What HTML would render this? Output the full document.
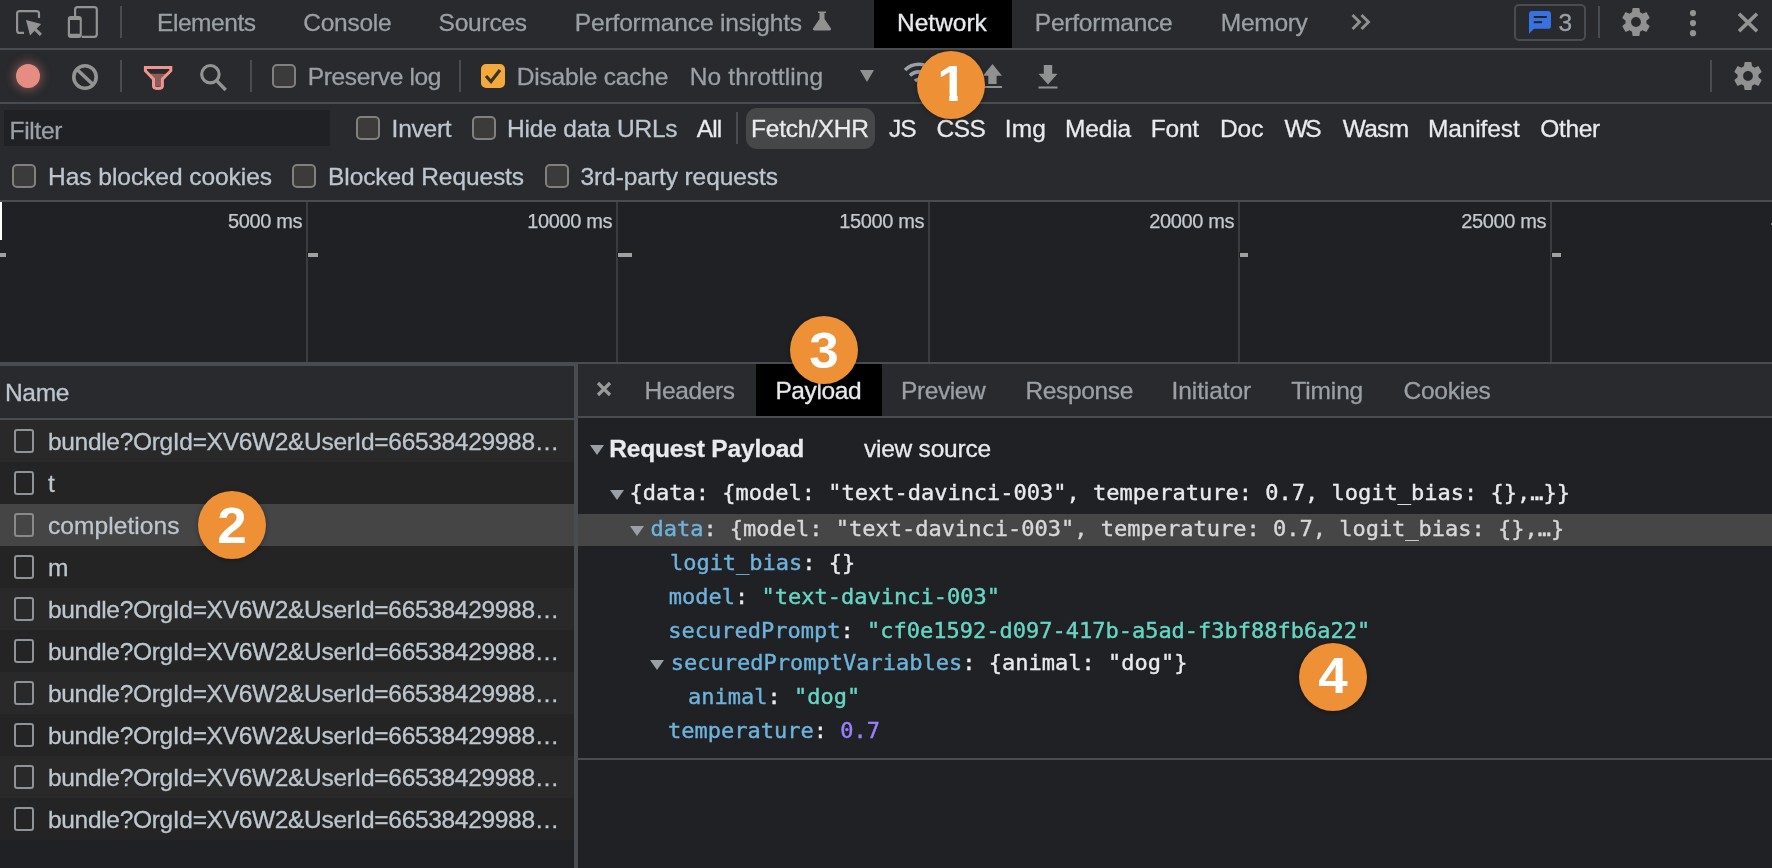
<!DOCTYPE html>
<html lang="en">
<head>
<meta charset="utf-8">
<title>DevTools - Network</title>
<style>
*{box-sizing:border-box;margin:0;padding:0}
html,body{width:1772px;height:868px;overflow:hidden;background:#202124}
body{position:relative;font-family:"Liberation Sans",Arial,Helvetica,sans-serif;font-size:24px;color:#9aa0a6;-webkit-font-smoothing:antialiased}
#root{position:absolute;left:0;top:0;width:1772px;height:868px;will-change:transform}
.abs{position:absolute}
.bar{position:absolute;left:0;width:1772px;background:#292a2d}
.hl{position:absolute;left:0;width:1772px;height:2px;background:#494c50}
.vd{position:absolute;width:2px;background:#494c50}
.t{position:absolute;white-space:nowrap;line-height:28px;height:28px;font-size:24.5px;color:#9aa0a6;letter-spacing:-0.25px;margin-top:1px;-webkit-text-stroke:0.3px currentColor}
.tl{color:#bdc6cf}
.w{color:#e8eaed}
.cb{position:absolute;width:24px;height:24px;border:2px solid #827f7d;border-radius:5px;background:#3b3b3b}
.rcb{position:absolute;left:14px;width:20px;height:24px;border:2px solid #8e9398;border-radius:3px}
.row{position:absolute;left:0;width:574px;height:42px}
.row .t{left:48px;top:7px;color:#bdc6cf;letter-spacing:0}
.gl{position:absolute;top:202px;width:2px;height:160px;background:#3a3c3f}
.tk{position:absolute;top:253px;height:4px;background:#a0a0a0;box-shadow:0 0 0 1px #202124}
.lab{position:absolute;top:209px;font-size:20px;line-height:24px;color:#c4c9cf;white-space:nowrap;text-align:right;width:120px;letter-spacing:-0.4px;-webkit-text-stroke:0.25px currentColor}
.m{position:absolute;white-space:pre;font-family:"DejaVu Sans Mono","Liberation Mono",monospace;font-size:22px;line-height:34px;height:34px;color:#e8eaed;margin-left:-1.5px;-webkit-text-stroke:0.4px currentColor}
.k{color:#6db3dc}
.s{color:#66d6c3}
.n{color:#9980ff}
.tri{position:absolute;width:0;height:0;border-left:7.3px solid transparent;border-right:7.3px solid transparent;border-top:10.5px solid #9aa0a5}
.badge{position:absolute;width:68px;height:68px;border-radius:50%;background:#ee9036;color:#fff;font-weight:bold;font-size:50px;line-height:71px;text-align:center;box-shadow:0 1px 5px rgba(0,0,0,.3)}
.badge b{display:inline-block;transform:scaleX(1.06)}
svg{position:absolute;overflow:visible}
</style>
</head>
<body>
<div id="root">

<!-- ===== main tab bar ===== -->
<div class="bar" style="top:0;height:48px"></div>
<div class="hl" style="top:48px"></div>
<div class="abs" style="left:874px;top:0;width:138px;height:48px;background:#000"></div>

<svg id="i-inspect" style="left:0;top:0" width="130" height="48" viewBox="0 0 130 48"><path d="M24 32.900H19.600A2.500 2.500 0 0 1 17.100 30.400V13.600A2.500 2.500 0 0 1 19.600 11.100H36.500A2.500 2.500 0 0 1 39 13.600V18.100" fill="none" stroke="#939393" stroke-width="2.200"/><path d="M26 20L41.200 24.100L30 35.500Z" fill="#939393"/><path d="M34.500 28.700L40.900 34.900" stroke="#939393" stroke-width="3" fill="none"/></svg>
<svg id="i-device" style="left:0;top:0" width="130" height="48" viewBox="0 0 130 48"><path d="M75.100 16.200V9.600A2.500 2.500 0 0 1 77.600 7.100H94.300A2.500 2.500 0 0 1 96.800 9.600V34.300A2.500 2.500 0 0 1 94.300 36.800H81.800" fill="none" stroke="#939393" stroke-width="2.200"/><path fill-rule="evenodd" fill="#939393" d="M70.800 16.100H78.800A3 3 0 0 1 81.800 19.100V34.900A3 3 0 0 1 78.800 37.900H70.800A3 3 0 0 1 67.800 34.900V19.100A3 3 0 0 1 70.800 16.100ZM70 20V33.700H79.700V20Z"/></svg>
<div class="vd" style="left:120px;top:6px;height:32px"></div>

<div class="t" style="left:157.1px;top:8px;letter-spacing:-0.46px;">Elements</div>
<div class="t" style="left:303.2px;top:8px;letter-spacing:-0.24px;">Console</div>
<div class="t" style="left:438.6px;top:8px;letter-spacing:-0.23px;">Sources</div>
<div class="t" style="left:574.8px;top:8px;letter-spacing:-0.15px;">Performance insights</div>
<svg id="i-flask" style="left:812px;top:11px" width="20" height="20" viewBox="0 0 20 20"><path d="M6 0.500H14V2H12.500V8L19 17.500A1.500 1.500 0 0 1 17.800 19.500H2.200A1.500 1.500 0 0 1 1 17.500L7.500 8V2H6Z" fill="#919191"/></svg>
<div class="t w" style="left:897.1px;top:8px;letter-spacing:-0.02px;">Network</div>
<div class="t" style="left:1034.8px;top:8px;letter-spacing:-0.23px;">Performance</div>
<div class="t" style="left:1220.8px;top:8px;letter-spacing:-0.28px;">Memory</div>
<svg id="i-more" style="left:1351px;top:14px" width="20" height="16" viewBox="0 0 20 16"><path d="M1.500 1L8.500 8L1.500 15M10.500 1L17.500 8L10.500 15" fill="none" stroke="#919191" stroke-width="2.900"/></svg>

<div class="abs" style="left:1514px;top:4px;width:72px;height:37px;border:2px solid #494c50;border-radius:5px"></div>
<svg id="i-issue" style="left:1529px;top:10.800px" width="22" height="22.200" viewBox="0 0 22 23" preserveAspectRatio="none"><path d="M3 0H19A3 3 0 0 1 22 3V15.500A3 3 0 0 1 19 18.500H5L0 23.500V3A3 3 0 0 1 3 0Z" fill="#3871e0"/><rect x="4.800" y="5.200" width="13" height="2" fill="#24211f"/><rect x="4.800" y="10.600" width="8.300" height="2" fill="#24211f"/></svg>
<div class="t" style="left:1558.6px;top:8px;letter-spacing:-0.25px;">3</div>
<div class="vd" style="left:1598px;top:6px;height:32px"></div>
<svg class="gear" style="left:1622px;top:8px" width="28" height="28" viewBox="0 0 24 24"><path fill="#919191" d="M19.430 12.980c.040-.320.070-.640.070-.980s-.030-.660-.070-.980l2.110-1.650c.190-.150.240-.420.120-.640l-2-3.460c-.120-.220-.390-.300-.610-.220l-2.490 1c-.520-.400-1.080-.730-1.690-.980l-.380-2.650C14.460 2.180 14.250 2 14 2h-4c-.250 0-.460.180-.490.420l-.380 2.650c-.610.250-1.170.590-1.690.980l-2.490-1c-.230-.090-.490 0-.610.220l-2 3.460c-.130.220-.070.490.120.640l2.110 1.650c-.040.320-.070.650-.070.980s.030.660.070.980l-2.110 1.650c-.190.150-.240.420-.120.640l2 3.460c.120.220.390.300.610.220l2.490-1c.520.400 1.080.730 1.690.980l.380 2.650c.030.240.240.420.490.420h4c.250 0 .460-.180.490-.420l.380-2.650c.610-.250 1.170-.590 1.690-.980l2.490 1c.230.090.490 0 .610-.220l2-3.460c.120-.220.070-.490-.120-.640l-2.110-1.650zM12 15.500c-1.930 0-3.500-1.570-3.500-3.500s1.570-3.500 3.500-3.500 3.500 1.570 3.500 3.500-1.570 3.500-3.500 3.500z" transform="translate(12 12) scale(1.200) translate(-12 -12)"/></svg>
<svg id="i-kebab" style="left:1689px;top:9px" width="8" height="28" viewBox="0 0 8 28"><circle cx="4" cy="4.100" r="3.100" fill="#939393"/><circle cx="4" cy="14.100" r="3.100" fill="#939393"/><circle cx="4" cy="24.200" r="3.100" fill="#939393"/></svg>
<svg id="i-close" style="left:1738px;top:13px" width="20" height="19" viewBox="0 0 20 19"><path d="M1 0.700L19 18.300M19 0.700L1 18.300" stroke="#939393" stroke-width="3.700" fill="none"/></svg>

<!-- ===== network toolbar ===== -->
<div class="bar" style="top:50px;height:52px"></div>
<div class="hl" style="top:102px"></div>
<div class="abs" style="left:16px;top:64px;width:24px;height:24px;border-radius:50%;background:#e68c83;box-shadow:0 0 8px 3px rgba(230,140,131,.35)"></div>
<svg id="i-clear" style="left:72px;top:64px" width="26" height="26" viewBox="0 0 26 26"><circle cx="13" cy="13" r="11.200" fill="none" stroke="#939393" stroke-width="3.600"/><path d="M5 5.500L21 20.500" stroke="#939393" stroke-width="3.600"/></svg>
<div class="vd" style="left:120px;top:60px;height:32px"></div>
<svg id="i-filter" style="left:143px;top:65px" width="31" height="26" viewBox="0 0 31 26"><path d="M6.500 8.800H23.700L19.400 13.500V21.500H10.500V13.500Z" fill="#8a5c5a"/><path d="M2.400 2.400H27.800V5.700L19.400 14.200V21.300Q19.400 23.400 15 23.400Q10.500 23.400 10.500 21.300V14.200L2.400 5.700Z" fill="none" stroke="#ee968e" stroke-width="3" stroke-linejoin="miter"/></svg>
<svg id="i-search" style="left:200px;top:63px" width="28" height="30" viewBox="0 0 28 30"><circle cx="10.400" cy="11.200" r="8.700" fill="none" stroke="#939393" stroke-width="3.200"/><path d="M16.600 17.600L25.700 27" stroke="#939393" stroke-width="3.500"/></svg>
<div class="vd" style="left:250px;top:60px;height:32px"></div>
<div class="cb" style="left:272px;top:64px"></div>
<div class="t" style="left:307.8px;top:62px;letter-spacing:-0.35px;">Preserve log</div>
<div class="vd" style="left:459px;top:60px;height:32px"></div>
<div class="cb" style="left:481px;top:64px;background:#f4a93d;border-color:#f4a93d"></div>
<svg id="i-check" style="left:484px;top:68px" width="18" height="16" viewBox="0 0 18 16"><path d="M2 8L7 13.500L16 2" fill="none" stroke="#3a3326" stroke-width="3.200"/></svg>
<div class="t" style="left:516.8px;top:62px;letter-spacing:-0.19px;">Disable cache</div>
<div class="t" style="left:689.8px;top:62px;letter-spacing:0.11px;">No throttling</div>
<div class="tri" style="left:859.5px;top:70px;border-top-width:12px;border-top-color:#919191"></div>
<svg id="i-wifi" style="left:903px;top:60.700px" width="32" height="26" viewBox="0 0 32 26"><path d="M2 9A20 20 0 0 1 30 9M7 14.500A13 13 0 0 1 25 14.500M12 20A6 6 0 0 1 20 20" fill="none" stroke="#9aa0a6" stroke-width="3.600"/></svg>
<svg id="i-up" style="left:983px;top:64px" width="20" height="24" viewBox="0 0 20 24"><path d="M9.500 0L19 11.700H13.600V20H5.300V11.700H0Z" fill="#919191"/><rect x="1" y="22" width="18" height="2" fill="#919191"/></svg>
<svg id="i-down" style="left:1038px;top:64.500px" width="20" height="24" viewBox="0 0 20 24"><path d="M10 19.500L19.500 8.800H14.200V0H5.800V8.800H0.500Z" fill="#919191"/><rect x="0.500" y="21.500" width="19" height="2" fill="#919191"/></svg>
<div class="vd" style="left:1710px;top:60px;height:32px"></div>
<svg class="gear" style="left:1734px;top:62px" width="28" height="28" viewBox="0 0 24 24"><path fill="#919191" d="M19.430 12.980c.040-.320.070-.640.070-.980s-.030-.660-.070-.980l2.110-1.650c.190-.150.240-.420.120-.640l-2-3.460c-.120-.220-.390-.300-.610-.220l-2.490 1c-.520-.400-1.080-.730-1.690-.980l-.380-2.650C14.460 2.180 14.250 2 14 2h-4c-.250 0-.460.180-.490.420l-.380 2.650c-.610.250-1.170.590-1.690.980l-2.490-1c-.230-.090-.490 0-.610.220l-2 3.460c-.130.220-.070.490.120.640l2.110 1.650c-.040.320-.070.650-.070.980s.030.660.070.980l-2.110 1.650c-.190.150-.240.420-.120.640l2 3.460c.120.220.390.300.610.220l2.490-1c.520.400 1.080.730 1.690.980l.380 2.650c.030.240.240.420.490.420h4c.250 0 .460-.180.490-.420l.380-2.650c.610-.250 1.170-.590 1.690-.980l2.490 1c.230.090.490 0 .610-.220l2-3.460c.120-.220.070-.490-.120-.640l-2.110-1.650zM12 15.500c-1.930 0-3.500-1.570-3.500-3.500s1.570-3.500 3.500-3.500 3.500 1.570 3.500 3.500-1.570 3.500-3.500 3.500z" transform="translate(12 12) scale(1.200) translate(-12 -12)"/></svg>

<!-- ===== filter bar ===== -->
<div class="bar" style="top:104px;height:96px"></div>
<div class="hl" style="top:200px"></div>
<div class="abs" style="left:4px;top:110px;width:326px;height:36px;background:#202124"></div>
<div class="t" style="left:9.6px;top:116px;letter-spacing:-0.33px;">Filter</div>
<div class="cb" style="left:356px;top:116px"></div>
<div class="t tl" style="left:391.6px;top:114px;letter-spacing:-0.24px;">Invert</div>
<div class="cb" style="left:472px;top:116px"></div>
<div class="t tl" style="left:507.1px;top:114px;letter-spacing:-0.19px;">Hide data URLs</div>
<div class="t w" style="left:696.7px;top:114px;letter-spacing:-0.90px;">All</div>
<div class="vd" style="left:736px;top:112px;height:32px"></div>
<div class="abs" style="left:746px;top:108px;width:129px;height:41px;border-radius:11px;background:#464749"></div>
<div class="t w" style="left:751.1px;top:114px;letter-spacing:-0.25px;">Fetch/XHR</div>
<div class="t w" style="left:889.0px;top:114px;letter-spacing:-0.88px;">JS</div>
<div class="t w" style="left:936.5px;top:114px;letter-spacing:-0.51px;">CSS</div>
<div class="t w" style="left:1004.7px;top:114px;letter-spacing:0.21px;">Img</div>
<div class="t w" style="left:1064.9px;top:114px;letter-spacing:-0.10px;">Media</div>
<div class="t w" style="left:1150.8px;top:114px;letter-spacing:-0.25px;">Font</div>
<div class="t w" style="left:1219.9px;top:114px;letter-spacing:-0.02px;">Doc</div>
<div class="t w" style="left:1284.5px;top:114px;letter-spacing:-2.33px;">WS</div>
<div class="t w" style="left:1342.7px;top:114px;letter-spacing:-0.71px;">Wasm</div>
<div class="t w" style="left:1427.9px;top:114px;letter-spacing:-0.11px;">Manifest</div>
<div class="t w" style="left:1540.2px;top:114px;letter-spacing:-0.31px;">Other</div>

<div class="cb" style="left:12px;top:164px"></div>
<div class="t tl" style="left:48.1px;top:162px;letter-spacing:-0.04px;">Has blocked cookies</div>
<div class="cb" style="left:292px;top:164px"></div>
<div class="t tl" style="left:328.1px;top:162px;letter-spacing:-0.10px;">Blocked Requests</div>
<div class="cb" style="left:545px;top:164px"></div>
<div class="t tl" style="left:580.5px;top:162px;letter-spacing:-0.08px;">3rd-party requests</div>

<!-- ===== timeline overview ===== -->
<div class="gl" style="left:306px"></div>
<div class="gl" style="left:616px"></div>
<div class="gl" style="left:928px"></div>
<div class="gl" style="left:1238px"></div>
<div class="gl" style="left:1550px"></div>
<div class="lab" style="left:182px">5000 ms</div>
<div class="lab" style="left:492px">10000 ms</div>
<div class="lab" style="left:804px">15000 ms</div>
<div class="lab" style="left:1114px">20000 ms</div>
<div class="lab" style="left:1426px">25000 ms</div>
<div class="tk" style="left:0;width:6px"></div>
<div class="tk" style="left:308px;width:10px"></div>
<div class="tk" style="left:618px;width:14px"></div>
<div class="tk" style="left:1240px;width:8px"></div>
<div class="tk" style="left:1552px;width:9px"></div>
<div class="abs" style="left:0;top:202px;width:2px;height:38px;background:#fff"></div>
<div class="abs" style="left:1771px;top:223px;width:1px;height:2px;background:#7d8085"></div>
<div class="hl" style="top:362px"></div>

<!-- ===== request list (left) ===== -->
<div class="abs" style="left:0;top:364px;width:574px;height:2px;background:#494c50"></div>
<div class="abs" style="left:0;top:366px;width:574px;height:52px;background:#292a2d"></div>
<div class="abs" style="left:0;top:418px;width:574px;height:2px;background:#494c50"></div>
<div class="t tl" style="left:4.9px;top:378px;letter-spacing:-0.26px;">Name</div>

<div class="row" style="top:420px;background:#292929"><div class="rcb" style="top:9px"></div><div class="t" style="letter-spacing:-0.32px">bundle?OrgId=XV6W2&amp;UserId=66538429988…</div></div>
<div class="row" style="top:462px;background:#242424"><div class="rcb" style="top:9px"></div><div class="t">t</div></div>
<div class="row" style="top:504px;background:#454545"><div class="rcb" style="top:9px;border-color:#8a8a8a"></div><div class="t" style="letter-spacing:0.08px">completions</div></div>
<div class="row" style="top:546px;background:#242424"><div class="rcb" style="top:9px"></div><div class="t">m</div></div>
<div class="row" style="top:588px;background:#292929"><div class="rcb" style="top:9px"></div><div class="t" style="letter-spacing:-0.32px">bundle?OrgId=XV6W2&amp;UserId=66538429988…</div></div>
<div class="row" style="top:630px;background:#242424"><div class="rcb" style="top:9px"></div><div class="t" style="letter-spacing:-0.32px">bundle?OrgId=XV6W2&amp;UserId=66538429988…</div></div>
<div class="row" style="top:672px;background:#292929"><div class="rcb" style="top:9px"></div><div class="t" style="letter-spacing:-0.32px">bundle?OrgId=XV6W2&amp;UserId=66538429988…</div></div>
<div class="row" style="top:714px;background:#242424"><div class="rcb" style="top:9px"></div><div class="t" style="letter-spacing:-0.32px">bundle?OrgId=XV6W2&amp;UserId=66538429988…</div></div>
<div class="row" style="top:756px;background:#292929"><div class="rcb" style="top:9px"></div><div class="t" style="letter-spacing:-0.32px">bundle?OrgId=XV6W2&amp;UserId=66538429988…</div></div>
<div class="row" style="top:798px;background:#242424"><div class="rcb" style="top:9px"></div><div class="t" style="letter-spacing:-0.32px">bundle?OrgId=XV6W2&amp;UserId=66538429988…</div></div>

<div class="abs" style="left:574px;top:364px;width:4px;height:504px;background:#494c50"></div>

<!-- ===== detail pane (right) ===== -->
<div class="abs" style="left:578px;top:364px;width:1194px;height:52px;background:#292a2d"></div>
<div class="abs" style="left:578px;top:416px;width:1194px;height:2px;background:#494c50"></div>
<svg id="i-x2" style="left:597px;top:382px" width="14" height="14" viewBox="0 0 14 14"><path d="M1 1L13 13M13 1L1 13" stroke="#9a9a9a" stroke-width="3.200" fill="none"/></svg>
<div class="abs" style="left:756px;top:364px;width:126px;height:52px;background:#000"></div>
<div class="t" style="left:644.6px;top:376px;letter-spacing:-0.36px;">Headers</div>
<div class="t w" style="left:775.4px;top:376px;letter-spacing:-0.37px;">Payload</div>
<div class="t" style="left:901.1px;top:376px;letter-spacing:-0.43px;">Preview</div>
<div class="t" style="left:1025.4px;top:376px;letter-spacing:-0.34px;">Response</div>
<div class="t" style="left:1171.5px;top:376px;letter-spacing:-0.08px;">Initiator</div>
<div class="t" style="left:1291.3px;top:376px;letter-spacing:-0.13px;">Timing</div>
<div class="t" style="left:1403.5px;top:376px;letter-spacing:-0.23px;">Cookies</div>

<div class="tri" style="left:589.5px;top:444.5px"></div>
<div class="t w" style="left:609.3px;top:434px;letter-spacing:-0.18px;font-weight:bold">Request Payload</div>
<div class="t w" style="left:863.9px;top:434px;letter-spacing:-0.22px;">view source</div>

<div class="abs" style="left:578px;top:514px;width:1194px;height:32px;background:#464646"></div>
<div class="tri" style="left:610px;top:490px"></div>
<div class="m" style="left:631px;top:476px">{data: {model: "text-davinci-003", temperature: 0.7, logit_bias: {},…}}</div>
<div class="tri" style="left:629.5px;top:526px"></div>
<div class="m" style="left:651.9px;top:512px;color:#d7d7d7"><span class="k">data</span>: {model: "text-davinci-003", temperature: 0.7, logit_bias: {},…}</div>
<div class="m" style="left:671.4px;top:546px"><span class="k">logit_bias</span>: {}</div>
<div class="m" style="left:670.3px;top:580px"><span class="k">model</span>: <span class="s">"text-davinci-003"</span></div>
<div class="m" style="left:669.8px;top:614px"><span class="k">securedPrompt</span>: <span class="s">"cf0e1592-d097-417b-a5ad-f3bf88fb6a22"</span></div>
<div class="tri" style="left:650px;top:660px"></div>
<div class="m" style="left:672.3px;top:646px"><span class="k">securedPromptVariables</span>: {animal: "dog"}</div>
<div class="m" style="left:689.6px;top:680px"><span class="k">animal</span>: <span class="s">"dog"</span></div>
<div class="m" style="left:669.5px;top:714px"><span class="k">temperature</span>: <span class="n">0.7</span></div>
<div class="abs" style="left:578px;top:758px;width:1194px;height:2px;background:#494c50"></div>

<!-- ===== annotation badges ===== -->
<div class="badge" style="left:917px;top:50.5px;line-height:66.4px"><b style="position:relative;left:1px;clip-path:polygon(0 0,100% 0,100% 43px,19.35px 43px,19.35px 100%,11.45px 100%,11.45px 43px,0 43px)">1</b></div>
<div class="badge" style="left:198.4px;top:491px"><b>2</b></div>
<div class="badge" style="left:790px;top:316px"><b>3</b></div>
<div class="badge" style="left:1298.7px;top:643.4px;line-height:67.2px"><b>4</b></div>

</div>
</body>
</html>
